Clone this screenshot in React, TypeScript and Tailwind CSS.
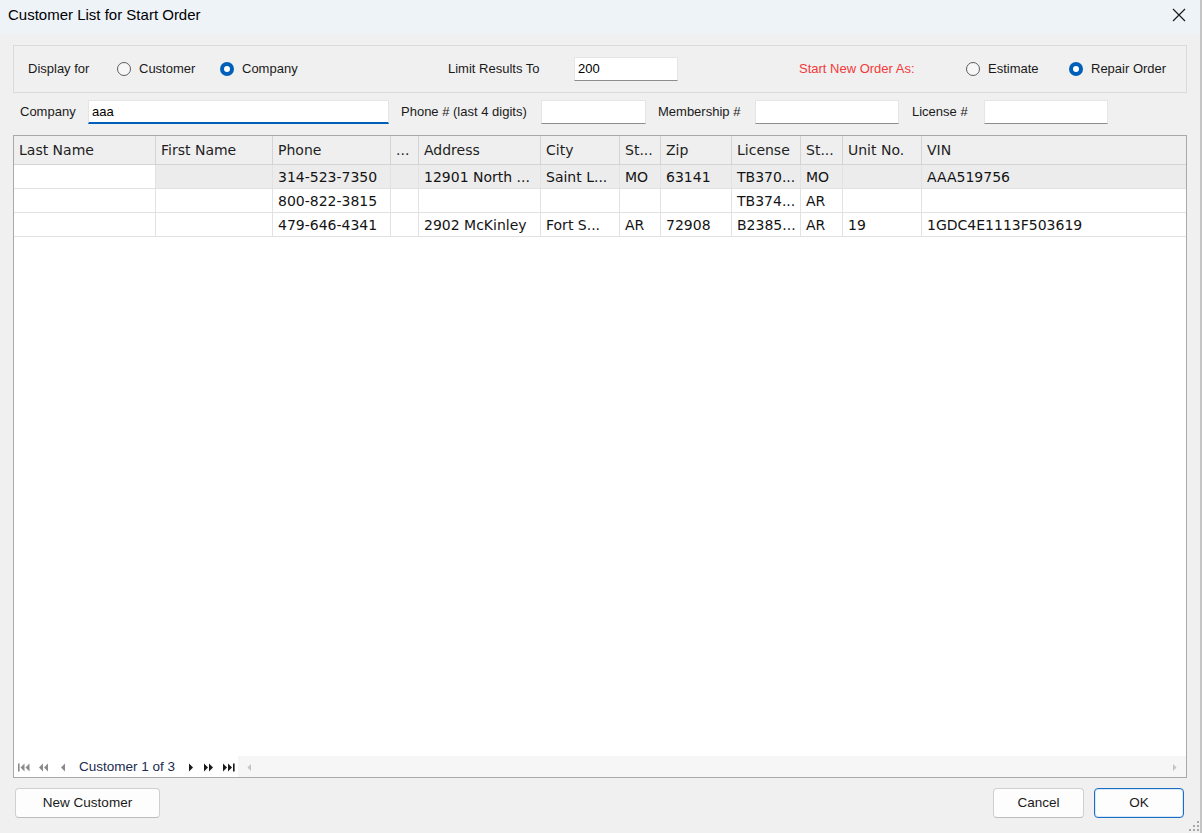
import React from "react";

const ui = { fontFamily: '"Liberation Sans", Arial, sans-serif' };
const grid = { fontFamily: '"DejaVu Sans", Verdana, sans-serif' };

type Col = { title: string; w: string };

const cols: Col[] = [
  { title: "Last Name", w: "w-[142px]" },
  { title: "First Name", w: "w-[117px]" },
  { title: "Phone", w: "w-[118px]" },
  { title: "...", w: "w-[28px]" },
  { title: "Address", w: "w-[122px]" },
  { title: "City", w: "w-[79px]" },
  { title: "St...", w: "w-[41px]" },
  { title: "Zip", w: "w-[71px]" },
  { title: "License", w: "w-[69px]" },
  { title: "St...", w: "w-[42px]" },
  { title: "Unit No.", w: "w-[79px]" },
  { title: "VIN", w: "flex-1" },
];

const rows: string[][] = [
  ["", "", "314-523-7350", "", "12901 North ...", "Saint L...", "MO", "63141", "TB370...", "MO", "", "AAA519756"],
  ["", "", "800-822-3815", "", "", "", "", "", "TB374...", "AR", "", ""],
  ["", "", "479-646-4341", "", "2902 McKinley", "Fort S...", "AR", "72908", "B2385...", "AR", "19", "1GDC4E1113F503619"],
];

function Radio({ label, checked, w }: { label: string; checked?: boolean; w: string }) {
  return (
    <div className={`flex items-center ${w}`}>
      {checked ? (
        <span className="w-[14px] h-[14px] rounded-full bg-[#005fb8] flex items-center justify-center">
          <span className="w-[6px] h-[6px] rounded-full bg-white" />
        </span>
      ) : (
        <span className="w-[14px] h-[14px] rounded-full border border-[#5d5d5d] bg-[#f7f7f7]" />
      )}
      <span className="ml-[8px] text-[13px] text-[#1a1a1a]">{label}</span>
    </div>
  );
}

function TextBox({ w, value, focused }: { w: string; value?: string; focused?: boolean }) {
  return (
    <div
      className={`${w} h-[24px] bg-white border border-[#e5e5e5] flex items-center pl-[3px] text-[13px] text-black ${
        focused ? "border-b-2 border-b-[#005fb8]" : "border-b-[#8d8d8d]"
      }`}
    >
      {value}
    </div>
  );
}

function NavIcon({ d, color, w, cls }: { d: string; color: string; w: number; cls: string }) {
  return (
    <svg width={w} height="9" viewBox={`0 0 ${w} 9`} className={`shrink-0 ${cls}`}>
      <path d={d} fill={color} />
    </svg>
  );
}

function Btn({ label, w, primary }: { label: string; w: string; primary?: boolean }) {
  return (
    <button
      className={`${w} h-[30px] rounded-[4px] bg-[#fdfdfd] text-[13.5px] text-[#1a1a1a] border ${
        primary ? "border-[#1a6fc4] shadow-[inset_0_0_0_1px_#d7e7f7]" : "border-[#d0d0d0] border-b-[#bdbdbd]"
      }`}
      style={ui}
    >
      {label}
    </button>
  );
}

export default function App() {
  return (
    <div className="w-[1202px] h-[833px] flex bg-[#bcbcbc] overflow-hidden" style={ui}>
      <div className="w-[1200px] h-full flex flex-col bg-[#f0f0f0] relative">
        {/* title bar */}
        <div className="h-[33px] bg-[#eef3f8] flex items-start justify-between pl-[8px] pr-[14px] pt-[5px]">
          <span className="text-[15px] leading-[20px] text-black">Customer List for Start Order</span>
          <svg width="14" height="14" viewBox="0 0 14 14" className="mt-[3px]">
            <path d="M1 1 L13 13 M13 1 L1 13" stroke="#1a1a1a" strokeWidth="1.2" />
          </svg>
        </div>

        <div className="flex-1 flex flex-col px-[13px] pt-[12px] pb-[15px]">
          {/* group box */}
          <div className="h-[48px] border border-[#dadada] flex items-center pl-[14px] shrink-0">
            <span className="w-[89px] text-[13px] text-[#1a1a1a]">Display for</span>
            <Radio label="Customer" w="w-[103px]" />
            <Radio label="Company" checked w="w-[228px]" />
            <span className="w-[126px] text-[13px] text-[#1a1a1a]">Limit Results To</span>
            <TextBox w="w-[104px]" value="200" />
            <span className="w-[121px]" />
            <span className="w-[167px] text-[13px] text-[#f23a3a]">Start New Order As:</span>
            <Radio label="Estimate" w="w-[103px]" />
            <Radio label="Repair Order" checked w="w-[110px]" />
          </div>

          {/* search row */}
          <div className="mt-[7px] flex items-center pl-[7px] shrink-0">
            <span className="w-[68px] text-[13px] text-[#1a1a1a]">Company</span>
            <TextBox w="w-[301px]" value="aaa" focused />
            <span className="ml-[12px] w-[140px] text-[13px] text-[#1a1a1a]">Phone # (last 4 digits)</span>
            <TextBox w="w-[105px]" />
            <span className="ml-[12px] w-[97px] text-[13px] text-[#1a1a1a]">Membership #</span>
            <TextBox w="w-[144px]" />
            <span className="ml-[13px] w-[72px] text-[13px] text-[#1a1a1a]">License #</span>
            <TextBox w="w-[124px]" />
          </div>

          {/* grid */}
          <div className="mt-[11px] flex-1 flex flex-col border border-[#a9a9a9] bg-white min-h-0" style={grid}>
            <div className="h-[29px] flex bg-[#efefef] border-b border-[#d4d4d4] shrink-0">
              {cols.map((c, i) => (
                <div
                  key={i}
                  className={`${c.w} h-full flex items-center pl-[5px] text-[14px] text-[#1e1e1e] whitespace-nowrap overflow-hidden ${
                    i < cols.length - 1 ? "border-r border-[#d4d4d4]" : ""
                  }`}
                >
                  {c.title}
                </div>
              ))}
            </div>
            {rows.map((r, ri) => (
              <div key={ri} className="h-[24px] flex border-b border-[#e2e2e2] shrink-0">
                {r.map((v, ci) => (
                  <div
                    key={ci}
                    className={`${cols[ci].w} h-full flex items-center pl-[5px] pt-[1px] text-[14px] text-[#141414] whitespace-nowrap overflow-hidden ${
                      ci < cols.length - 1 ? "border-r border-[#e2e2e2]" : ""
                    } ${ri === 0 && ci > 0 ? "bg-[#ececec]" : "bg-white"}`}
                  >
                    {v}
                  </div>
                ))}
              </div>
            ))}
            <div className="flex-1" />

            {/* navigator */}
            <div className="h-[21px] flex items-center shrink-0" style={ui}>
              <div className="w-[224px] h-full bg-white flex items-center pl-[4px] pt-[2px]">
                <NavIcon w={12} cls="" d="M0 0.5 H1.6 V8.5 H0 Z M6.5 0.5 V8.5 L2.5 4.5 Z M11.5 0.5 V8.5 L7.5 4.5 Z" color="#8a8a8a" />
                <NavIcon w={10} cls="ml-[8px]" d="M5 0.5 V8.5 L1 4.5 Z M10 0.5 V8.5 L6 4.5 Z" color="#8a8a8a" />
                <NavIcon w={6} cls="ml-[12px]" d="M5 0.5 V8.5 L1 4.5 Z" color="#8a8a8a" />
                <span className="ml-[13px] text-[13.5px] text-[#1b2a4e] whitespace-nowrap">Customer 1 of 3</span>
                <NavIcon w={6} cls="ml-[13px]" d="M1 0.5 V8.5 L5 4.5 Z" color="#1a1a1a" />
                <NavIcon w={10} cls="ml-[10px]" d="M0 0.5 V8.5 L4 4.5 Z M5 0.5 V8.5 L9 4.5 Z" color="#1a1a1a" />
                <NavIcon w={12} cls="ml-[9px]" d="M0 0.5 V8.5 L4 4.5 Z M5 0.5 V8.5 L9 4.5 Z M10 0.5 H11.6 V8.5 H10 Z" color="#1a1a1a" />
              </div>
              <div className="flex-1 h-full bg-[#f6f6f6] flex items-center justify-between px-[8px] pt-[2px]">
                <svg width="6" height="9" viewBox="0 0 6 9">
                  <path d="M5 1 V8 L1.5 4.5 Z" fill="#c4c4c4" />
                </svg>
                <svg width="6" height="9" viewBox="0 0 6 9">
                  <path d="M1 1 V8 L4.5 4.5 Z" fill="#c4c4c4" />
                </svg>
              </div>
            </div>
          </div>

          {/* buttons */}
          <div className="mt-[10px] flex items-center shrink-0">
            <div className="ml-[2px]">
              <Btn label="New Customer" w="w-[145px]" />
            </div>
            <div className="ml-auto flex gap-[10px] mr-[3px]">
              <Btn label="Cancel" w="w-[91px]" />
              <Btn label="OK" w="w-[90px]" primary />
            </div>
          </div>
        </div>

        {/* size grip */}
        <svg width="10" height="10" viewBox="0 0 10 10" className="absolute right-[1px] bottom-[2px]">
          <rect x="8" y="0" width="2" height="2" fill="#a8a8a8" />
          <rect x="4" y="4" width="2" height="2" fill="#a8a8a8" />
          <rect x="8" y="4" width="2" height="2" fill="#a8a8a8" />
          <rect x="0" y="8" width="2" height="2" fill="#a8a8a8" />
          <rect x="4" y="8" width="2" height="2" fill="#a8a8a8" />
          <rect x="8" y="8" width="2" height="2" fill="#a8a8a8" />
        </svg>
      </div>
      <div className="w-[2px] h-full bg-[#c4c4c4]" />
    </div>
  );
}
